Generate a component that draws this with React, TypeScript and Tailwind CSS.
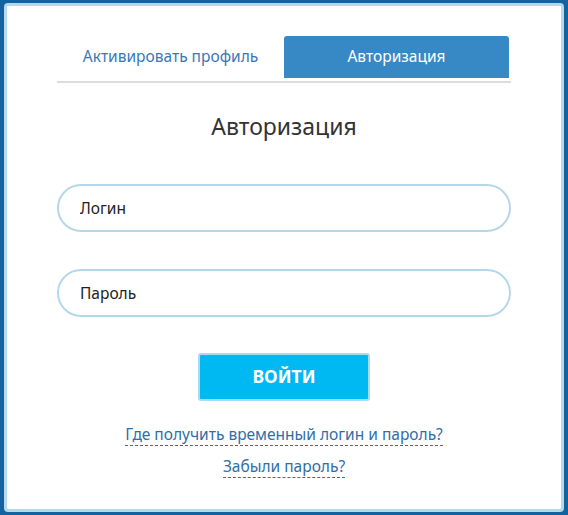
import React, { useState } from 'react';

export default function App() {
  const [tab, setTab] = useState<'activate' | 'login'>('login');
  const [login, setLogin] = useState('');
  const [password, setPassword] = useState('');

  return (
    <div className="min-h-screen bg-[#1363a0] px-[4px] py-[3px] font-['Noto_Sans',sans-serif]">
      <div className="h-[509px] rounded-[4px] border-[3px] border-[#b5d8ea] bg-white">
        <div className="mx-auto w-[454px] pt-[30px]">
          {/* Tabs */}
          <div className="flex border-b-2 border-[#dddddd] pb-[3px]">
            <button
              onClick={() => setTab('activate')}
              className={`h-[42px] w-[227px] rounded-t-[3px] text-[15.5px] ${
                tab === 'activate' ? 'bg-[#3789c5] text-white' : 'text-[#3a78b5]'
              }`}
            >
              Активировать профиль
            </button>
            <button
              onClick={() => setTab('login')}
              className={`h-[42px] w-[225px] rounded-t-[3px] text-[15.5px] ${
                tab === 'login' ? 'bg-[#3789c5] text-white' : 'text-[#3a78b5]'
              }`}
            >
              Авторизация
            </button>
          </div>

          <h2 className="mt-[26px] text-center text-[23px] text-[#333333]">Авторизация</h2>

          {/* Form */}
          <div className="mt-[40px] flex flex-col gap-[37px]">
            <input
              value={login}
              onChange={(e) => setLogin(e.target.value)}
              placeholder="Логин"
              className="h-[48px] rounded-full border-2 border-[#b5d7ea] px-[21px] text-[15.5px] text-[#222] outline-none placeholder:text-[#222]"
            />
            <input
              type="password"
              value={password}
              onChange={(e) => setPassword(e.target.value)}
              placeholder="Пароль"
              className="h-[48px] rounded-full border-2 border-[#b5d7ea] px-[21px] text-[15.5px] text-[#222] outline-none placeholder:text-[#222]"
            />
          </div>

          <div className="mt-[36px] flex justify-center">
            <button className="h-[48px] w-[172px] rounded-[3px] border-2 border-[#a9daf0] bg-[#00b9f2] text-[17.5px] font-bold text-white">
              ВОЙТИ
            </button>
          </div>

          <div className="mt-[23px] flex flex-col items-center gap-[10px] text-[15.5px] text-[#2f6ea8]">
            <a href="#" className="border-b border-dashed border-[#2f6ea8] leading-[21px]">
              Где получить временный логин и пароль?
            </a>
            <a href="#" className="border-b border-dashed border-[#2f6ea8] leading-[21px]">
              Забыли пароль?
            </a>
          </div>
        </div>
      </div>
    </div>
  );
}
